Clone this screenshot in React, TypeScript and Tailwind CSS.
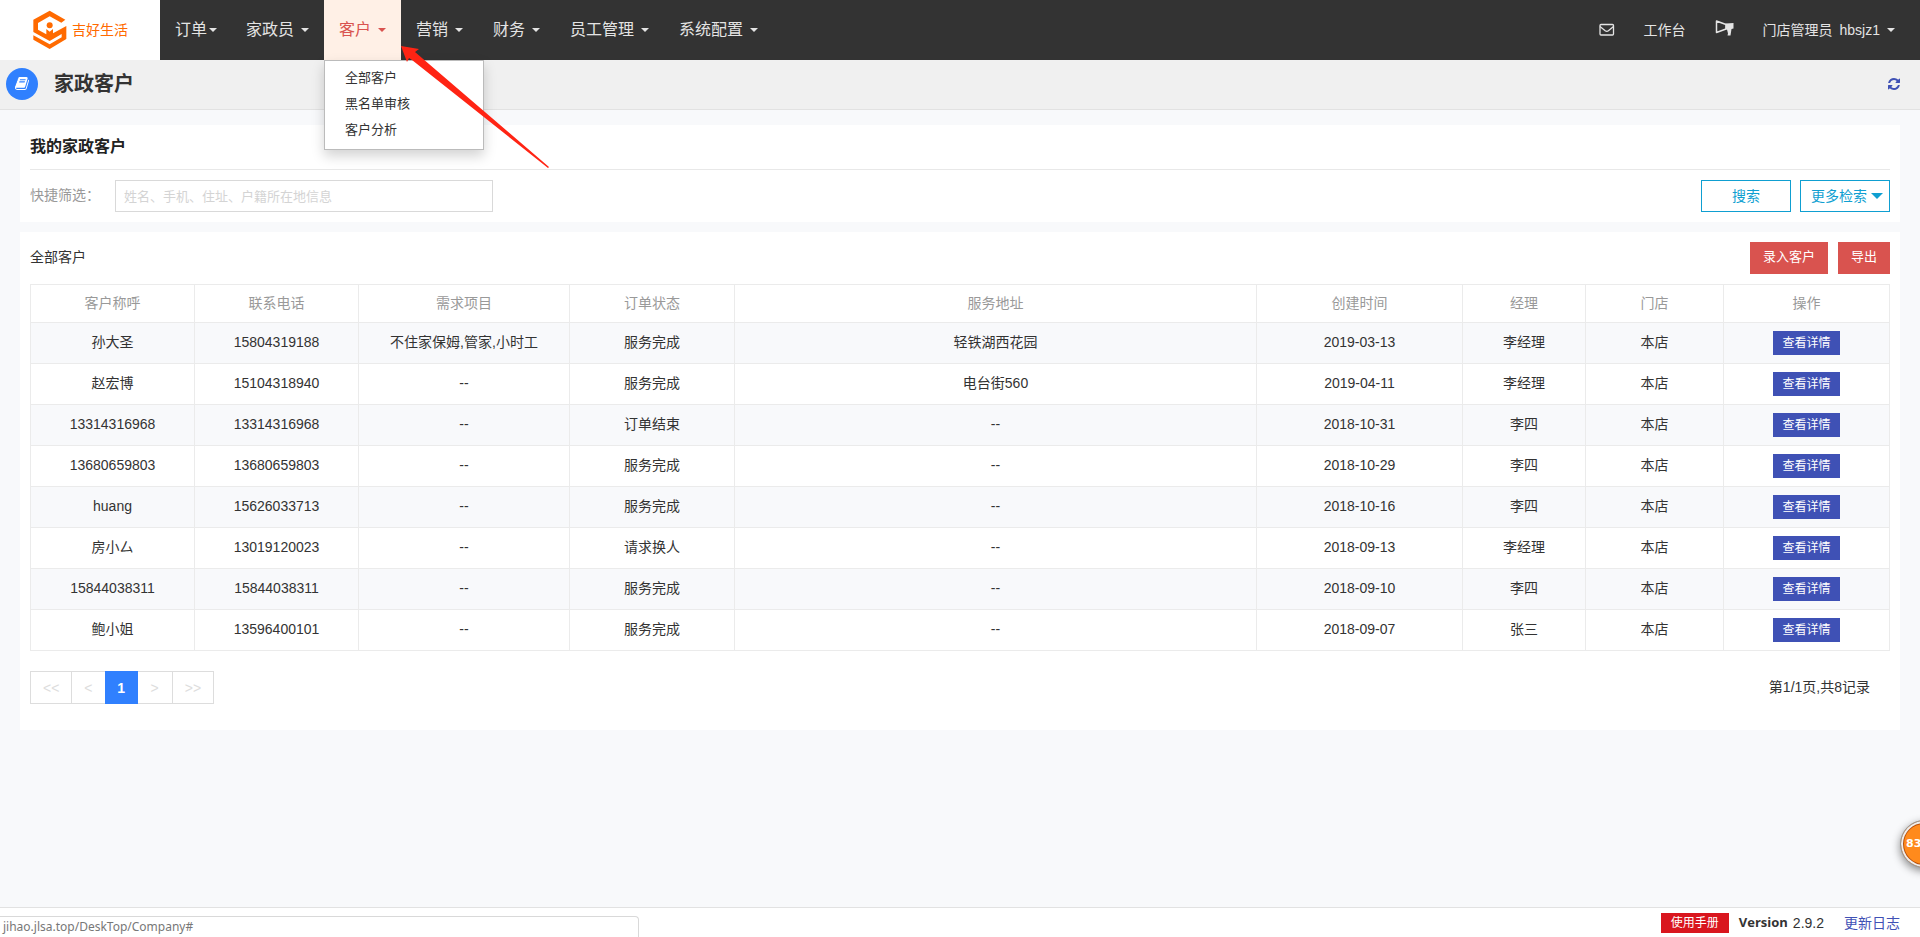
import * as React from "react";

const NAV = [
  { label: "订单", tight: true },
  { label: "家政员" },
  { label: "客户", active: true },
  { label: "营销" },
  { label: "财务" },
  { label: "员工管理" },
  { label: "系统配置" },
];

const MENU = ["全部客户", "黑名单审核", "客户分析"];

const COLUMNS = [
  { title: "客户称呼", width: "w-[164px]" },
  { title: "联系电话", width: "w-[164px]" },
  { title: "需求项目", width: "w-[211px]" },
  { title: "订单状态", width: "w-[165px]" },
  { title: "服务地址", width: "" },
  { title: "创建时间", width: "w-[206px]" },
  { title: "经理", width: "w-[123px]" },
  { title: "门店", width: "w-[138px]" },
  { title: "操作", width: "w-[166px]" },
];

const ROWS = [
  ["孙大圣", "15804319188", "不住家保姆,管家,小时工", "服务完成", "轻铁湖西花园", "2019-03-13", "李经理", "本店"],
  ["赵宏博", "15104318940", "--", "服务完成", "电台街560", "2019-04-11", "李经理", "本店"],
  ["13314316968", "13314316968", "--", "订单结束", "--", "2018-10-31", "李四", "本店"],
  ["13680659803", "13680659803", "--", "服务完成", "--", "2018-10-29", "李四", "本店"],
  ["huang", "15626033713", "--", "服务完成", "--", "2018-10-16", "李四", "本店"],
  ["房小厶", "13019120023", "--", "请求换人", "--", "2018-09-13", "李经理", "本店"],
  ["15844038311", "15844038311", "--", "服务完成", "--", "2018-09-10", "李四", "本店"],
  ["鲍小姐", "13596400101", "--", "服务完成", "--", "2018-09-07", "张三", "本店"],
];

const PAGES = ["<<", "<", "1", ">", ">>"];

function Caret() {
  return <span className="inline-block border-x-4 border-t-4 border-x-transparent border-t-current" />;
}

function Logo() {
  return (
    <svg width="34" height="40" viewBox="98 32 102 118" fill="#ff6a00" aria-hidden="true">
      <path d="M99 60 148 33 195 60 183 69 148 50 113 70V90L138 104V88L148 96 158 88V101L198 79V118L148 148 99 120V107L148 134 184 113V103L148 124 99 97Z" />
      <circle cx="148" cy="77" r="9" />
    </svg>
  );
}

function EnvelopeIcon() {
  return (
    <svg width="16" height="14" viewBox="0 0 16 14" fill="none" stroke="currentColor" strokeWidth="1.300" aria-hidden="true">
      <rect x="1" y="1.500" width="13.500" height="10.500" rx="1" />
      <path d="m1 3.500 5.200 4.200q1.600 1.200 3.200 0l5.100-4.200" />
    </svg>
  );
}

function HornIcon() {
  return (
    <svg width="19" height="18" viewBox="0 0 19 18" aria-hidden="true">
      <path d="M1.500 1v11.500L11 9V4.500z" fill="none" stroke="currentColor" strokeWidth="1.500" strokeLinejoin="round" />
      <path d="M10.500 3.500 18.500 3v5.500l-2 .5-1 6.500h-3l.5-2-1-4h-1.500z" fill="currentColor" />
    </svg>
  );
}

function BookIcon() {
  return (
    <svg width="14" height="13" viewBox="0 0 1664 1536" fill="currentColor" aria-hidden="true">
      <path d="M1639 350q40 57 18 129l-275 906q-19 64-76.500 107.500T1183 1536H260q-77 0-148.500-53.500T12 1351q-24-67-2-127 0-4 3-27t4-37q1-8-3-21.500t-3-19.500q2-11 8-21t16.500-23.500T52 1051q23-38 45-91.500t30-91.500q3-10 .5-30t-.5-28q3-11 17-28t17-23q21-36 42-92t25-90q1-9-2.500-32t.5-28q4-13 22-30.500t22-22.500q19-26 42.500-84.500T340 283q1-8-3-25.500t-2-26.500q2-8 9-18t18-23 17-21q8-12 16.500-30.500t15-35 16-36 19.500-32 26.500-23.500 36-11.500T556 5l-1 3q38-9 51-9h761q74 0 114 56t18 130l-274 906q-36 119-71.500 153.500T1025 1279H156q-27 0-38 15-11 16-1 43 24 70 144 70h923q29 0 56-15.500t35-41.500l300-987q7-22 5-57 38 15 59 43zM575 352q-4 13 2 22.500t20 9.500h608q13 0 25.500-9.500T1247 352l21-64q4-13-2-22.500t-20-9.500H638q-13 0-25.500 9.500T596 288zm-83 256q-4 13 2 22.500t20 9.500h608q13 0 25.500-9.500T1164 608l21-64q4-13-2-22.500t-20-9.500H555q-13 0-25.500 9.500T513 544z" />
    </svg>
  );
}

function RefreshIcon() {
  return (
    <svg width="12" height="12" viewBox="0 0 1536 1536" fill="currentColor" aria-hidden="true">
      <path d="M1511 928q0 5-1 7-64 268-268 434.500T764 1536q-146 0-282.500-55T238 1324l-129 129q-19 19-45 19t-45-19-19-45V960q0-26 19-45t45-19h448q26 0 45 19t19 45-19 45l-137 137q71 66 161 102t187 36q134 0 250-65t186-179q11-17 53-117 8-23 30-23h192q13 0 22.500 9.500t9.500 22.500zm25-800v448q0 26-19 45t-45 19h-448q-26 0-45-19t-19-45 19-45l138-138Q969 256 768 256q-134 0-250 65T332 500q-11 17-53 117-8 23-30 23H50q-13 0-22.500-9.500T18 608v-7q65-268 270-434.500T768 0q146 0 284 55.500T1297 212l130-129q19-19 45-19t45 19 19 45z" />
    </svg>
  );
}

function Header() {
  return (
    <header className="flex h-[60px] bg-[#333] text-[#e4e4e4]">
      <a href="#" className="flex w-40 shrink-0 items-center gap-[5px] bg-white pl-[33px] text-sm text-[#ff6a00]">
        <Logo />
        吉好生活
      </a>
      <nav className="flex text-base">
        {NAV.map((item) => (
          <div key={item.label} className="relative">
            <button
              className={
                "flex h-[60px] items-center " +
                (item.tight ? "gap-0.5 pl-[15px] pr-[14px] " : "gap-[7px] px-[15px] ") +
                (item.active ? "bg-[#fff0e6] text-[#d9534f]" : "")
              }
            >
              {item.label}
              <Caret />
            </button>
            {item.active && (
              <ul className="absolute left-0 top-full z-10 h-[90px] w-40 border border-[#bbb] bg-white py-1 text-[13px] leading-[26px] text-[#333] shadow-[0_6px_12px_rgba(0,0,0,0.175)]">
                {MENU.map((label) => (
                  <li key={label}>
                    <a href="#" className="block px-5">
                      {label}
                    </a>
                  </li>
                ))}
              </ul>
            )}
          </div>
        ))}
      </nav>
      <div className="ml-auto flex items-center gap-[29px] pr-[25px] text-sm">
        <button aria-label="消息">
          <EnvelopeIcon />
        </button>
        <a href="#">工作台</a>
        <button aria-label="公告" className="pb-0.5">
          <HornIcon />
        </button>
        <button className="flex items-center gap-[7px]">
          <span>门店管理员</span>
          <span>hbsjz1</span>
          <Caret />
        </button>
      </div>
    </header>
  );
}

function PageTitle() {
  return (
    <div className="flex h-[50px] items-center border-b border-[#e2e2e2] bg-[#f0f0f0] pb-0.5 pl-1.5 pr-5">
      <span className="flex h-8 w-8 items-center justify-center rounded-full bg-[#3080fe] text-white">
        <BookIcon />
      </span>
      <h1 className="ml-4 text-xl font-bold text-[#333]">家政客户</h1>
      <button aria-label="刷新" className="ml-auto text-[#3f51b5]">
        <RefreshIcon />
      </button>
    </div>
  );
}

function FilterPanel() {
  return (
    <section className="bg-white px-2.5 pb-2.5">
      <h2 className="flex h-[45px] items-center border-b border-[#e8e8e8] text-base font-bold text-[#222]">
        我的家政客户
      </h2>
      <div className="mt-2.5 flex items-center">
        <label htmlFor="quick" className="w-[85px] pb-0.5 text-sm text-[#999]">
          快捷筛选：
        </label>
        <input
          id="quick"
          placeholder="姓名、手机、住址、户籍所在地信息"
          className="h-8 w-[378px] border border-[#d9d9d9] px-2 text-[13px] placeholder:text-[#d4d4d4]"
        />
        <button className="ml-auto h-8 w-[90px] border border-[#0f9fd1] text-sm text-[#0f9fd1]">搜索</button>
        <button className="ml-[9px] flex h-8 w-[90px] items-center gap-1 border border-[#0f9fd1] pl-2.5 text-sm text-[#0f9fd1]">
          更多检索
          <span className="border-x-[6px] border-t-[6px] border-x-transparent border-t-current" />
        </button>
      </div>
    </section>
  );
}

function CustomerPanel() {
  return (
    <section className="mt-2.5 bg-white p-2.5 pb-[26px]">
      <div className="flex items-center gap-2.5 text-[13px]">
        <h2 className="mr-auto pb-0.5 text-sm">全部客户</h2>
        <button className="h-8 bg-[#d9534f] px-[13px] pb-0.5 text-white">录入客户</button>
        <button className="h-8 bg-[#d9534f] px-[13px] pb-0.5 text-white">导出</button>
      </div>
      <table className="mt-2.5 w-full table-fixed border-collapse text-center text-sm">
        <thead>
          <tr className="h-[38px] text-[#999]">
            {COLUMNS.map((c) => (
              <th key={c.title} className={"border border-[#ebebeb] pb-0.5 font-normal " + c.width}>
                {c.title}
              </th>
            ))}
          </tr>
        </thead>
        <tbody>
          {ROWS.map((row) => (
            <tr key={row[1]} className="h-[41px] odd:bg-[#f8f9fb]">
              {row.map((cell, i) => (
                <td key={i} className="border border-[#ebebeb] pb-0.5">
                  {cell}
                </td>
              ))}
              <td className="border border-[#ebebeb]">
                <button className="mx-auto block h-6 bg-[#3f51b5] px-[9px] text-xs text-white">查看详情</button>
              </td>
            </tr>
          ))}
        </tbody>
      </table>
      <div className="mt-5 flex items-center justify-between text-sm">
        <nav aria-label="分页" className="flex h-[33px]">
          {PAGES.map((p) => (
            <button
              key={p}
              className={
                p === "1"
                  ? "w-[33px] bg-[#3080fe] font-bold text-white"
                  : "border-y border-l border-[#ddd] px-3 text-[#ddd] last:border-r nth-4:border-l-0 nth-4:px-[13px]"
              }
            >
              {p}
            </button>
          ))}
        </nav>
        <span className="pb-0.5 pr-5">第1/1页,共8记录</span>
      </div>
    </section>
  );
}

function Footer() {
  return (
    <footer className="flex h-[30px] items-center justify-between border-t border-[#e2e2e2] bg-white">
      <div className="mt-2 h-[22px] w-[639px] rounded-tr border-r border-t border-[#d9d9d9] pl-[3px] font-['Noto_Sans',sans-serif] text-xs leading-5 text-[#777]">
        jihao.jlsa.top/DeskTop/Company#
      </div>
      <div className="flex items-center pr-5 text-sm">
        <a href="#" className="mr-2.5 h-5 bg-[#d9161e] px-2.5 text-xs leading-5 text-white">
          使用手册
        </a>
        <b className="mr-[5px] font-['Open_Sans',sans-serif] text-[13px]">Version</b> 2.9.2
        <a href="#" className="ml-5 text-[#3f51b5]">
          更新日志
        </a>
      </div>
    </footer>
  );
}

export default function App() {
  return (
    <div className="relative flex min-h-screen flex-col overflow-hidden bg-[#f8f9fb] font-['Liberation_Sans','Noto_Sans_CJK_SC',sans-serif] text-[#333]">
      <Header />
      <PageTitle />
      <main className="flex-1 px-5 pt-[15px]">
        <FilterPanel />
        <CustomerPanel />
      </main>
      <Footer />

      <svg className="pointer-events-none absolute left-[401px] top-[46px] z-20" width="150" height="124" viewBox="0 0 150 124" aria-hidden="true">
        <path d="M0 0 18 3l-4 3L148 121l-1 1L11 14 8 12 6 16z" fill="#ff2414" />
      </svg>
      <button className="absolute -right-7 bottom-[69px] flex h-12 w-12 items-center rounded-full border border-[#999] bg-[#ff8a1c] pl-[5px] font-['DejaVu_Sans',sans-serif] text-[11px] font-bold text-white shadow-[0_3px_8px_rgba(0,0,0,0.45),inset_0_0_0_2px_#eee,inset_0_0_0_3px_#b8500c]">
        83
      </button>
    </div>
  );
}
